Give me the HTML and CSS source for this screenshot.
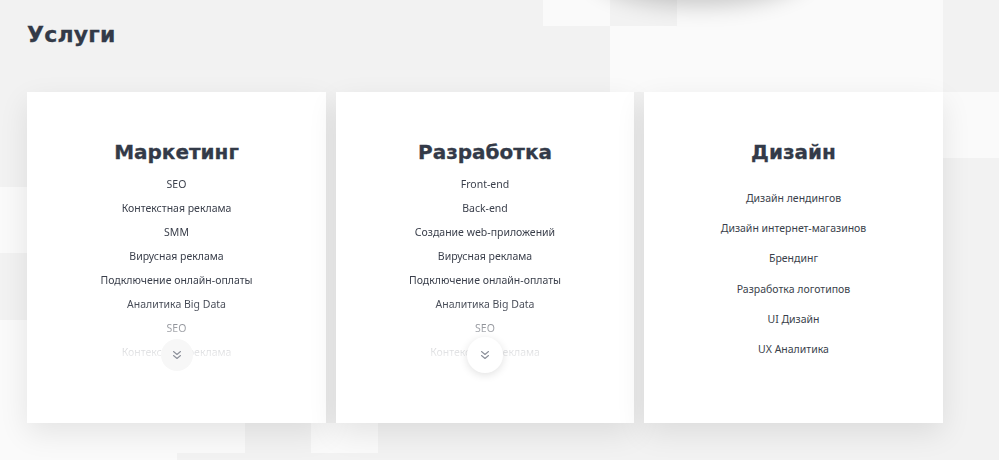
FILE: index.html
```html
<!DOCTYPE html>
<html lang="ru">
<head>
<meta charset="utf-8">
<title>Услуги</title>
<link rel="stylesheet" href="styles.css">
</head>
<body>
<div class="bg" aria-hidden="true">
  <div class="tile t1"></div>
  <div class="tile t2"></div>
  <div class="tile t3"></div>
  <div class="tile t4"></div>
  <div class="tile t5"></div>
  <div class="tile t6"></div>
  <div class="tile t7"></div>
  <div class="tile t8"></div>
  <div class="tile t9"></div>
  <div class="blob"></div>
</div>
<section class="services">
  <h1 class="title">Услуги</h1>
  <div class="cards">
    <div class="card">
      <h2 class="card-title">Маркетинг</h2>
      <ul class="list list-fade">
        <li>SEO</li>
        <li>Контекстная реклама</li>
        <li>SMM</li>
        <li>Вирусная реклама</li>
        <li>Подключение онлайн-оплаты</li>
        <li>Аналитика Big Data</li>
        <li>SEO</li>
        <li>Контекстная реклама</li>
      </ul>
      <button class="more more-flat" type="button" aria-label="Ещё">
        <svg viewBox="0 0 12 12" width="12" height="12"><path d="M2.5 2.5 6 5.5 9.5 2.5M2.5 6.5 6 9.5 9.5 6.5" fill="none" stroke="#8c909a" stroke-width="1.1" stroke-linecap="round" stroke-linejoin="round"/></svg>
      </button>
    </div>
    <div class="card">
      <h2 class="card-title">Разработка</h2>
      <ul class="list list-fade">
        <li>Front-end</li>
        <li>Back-end</li>
        <li>Создание web-приложений</li>
        <li>Вирусная реклама</li>
        <li>Подключение онлайн-оплаты</li>
        <li>Аналитика Big Data</li>
        <li>SEO</li>
        <li>Контекстная реклама</li>
      </ul>
      <button class="more more-raised" type="button" aria-label="Ещё">
        <svg viewBox="0 0 12 12" width="12" height="12"><path d="M2.5 2.5 6 5.5 9.5 2.5M2.5 6.5 6 9.5 9.5 6.5" fill="none" stroke="#8c909a" stroke-width="1.1" stroke-linecap="round" stroke-linejoin="round"/></svg>
      </button>
    </div>
    <div class="card">
      <h2 class="card-title">Дизайн</h2>
      <ul class="list list-wide">
        <li>Дизайн лендингов</li>
        <li>Дизайн интернет-магазинов</li>
        <li>Брендинг</li>
        <li>Разработка логотипов</li>
        <li>UI Дизайн</li>
        <li>UX Аналитика</li>
      </ul>
    </div>
  </div>
</section>
</body>
</html>
```
FILE: styles.css
```css
* { box-sizing: border-box; }
html, body { margin: 0; padding: 0; }
body {
  width: 999px;
  height: 460px;
  overflow: hidden;
  background: #f2f2f2;
  font-family: "Noto Sans", "Open Sans", sans-serif;
  position: relative;
}
.bg { position: absolute; inset: 0; z-index: 0; overflow: hidden; }
.tile { position: absolute; background: #fafafa; }
.t1 { left: 543px; top: 0; width: 67px; height: 26px; }
.t2 { left: 677px; top: 0; width: 266px; height: 26px; }
.t3 { left: 610px; top: 26px; width: 333px; height: 66px; }
.t4 { left: 943px; top: 92px; width: 56px; height: 66px; }
.t5 { left: 0; top: 187px; width: 27px; height: 66px; }
.t6 { left: 0; top: 320px; width: 27px; height: 133px; }
.t7 { left: 0; top: 423px; width: 245px; height: 30px; }
.t8 { left: 311px; top: 423px; width: 67px; height: 30px; }
.t9 { left: 0; top: 453px; width: 177px; height: 7px; }
.blob {
  position: absolute; left: 590px; top: -74px; width: 220px; height: 72px;
  border-radius: 50%;
  background: #f2f2f2;
  box-shadow: 0 8px 22px rgba(0,0,0,0.2);
}
.services { position: relative; z-index: 1; padding: 22px 27px 0; }
.title {
  margin: 0;
  font-family: "DejaVu Sans", sans-serif;
  font-weight: 700;
  font-size: 22px;
  line-height: 26px;
  color: #333a48;
  letter-spacing: 0.2px;
  -webkit-text-stroke: 0.3px #333a48;
}
.cards {
  margin-top: 44px;
  display: grid;
  grid-template-columns: 299px 298px 299px;
  gap: 10px;
}
.card {
  position: relative;
  height: 331px;
  background: #fff;
  box-shadow: 0 10px 28px rgba(0,0,0,0.09);
  display: flex;
  flex-direction: column;
  align-items: center;
  padding-top: 48px;
}
.card-title {
  margin: 0;
  font-family: "DejaVu Sans", sans-serif;
  font-weight: 700;
  font-size: 20px;
  line-height: 24px;
  color: #333a48;
  -webkit-text-stroke: 0.3px #333a48;
}
.list {
  list-style: none;
  margin: 0;
  padding: 0;
  text-align: center;
  font-size: 10.5px;
  color: #3a3f4b;
}
.list-fade {
  margin-top: 8px;
  line-height: 24px;
  -webkit-mask-image: linear-gradient(to bottom, #000 0, #000 128px, rgba(0,0,0,0.5) 156px, rgba(0,0,0,0.12) 182px);
  mask-image: linear-gradient(to bottom, #000 0, #000 128px, rgba(0,0,0,0.5) 156px, rgba(0,0,0,0.12) 182px);
}
.list-wide {
  margin-top: 19px;
  line-height: 30.2px;
}
.more {
  position: absolute;
  left: 50%;
  top: 247px;
  transform: translateX(-50%);
  border: 0;
  padding: 0;
  border-radius: 50%;
  display: flex;
  align-items: center;
  justify-content: center;
  cursor: pointer;
}
.more-flat { width: 32px; height: 32px; background: #f7f7f7; }
.more-raised { width: 36px; height: 36px; top: 245px; background: #fff; box-shadow: 0 2px 8px rgba(0,0,0,0.12); }
```
